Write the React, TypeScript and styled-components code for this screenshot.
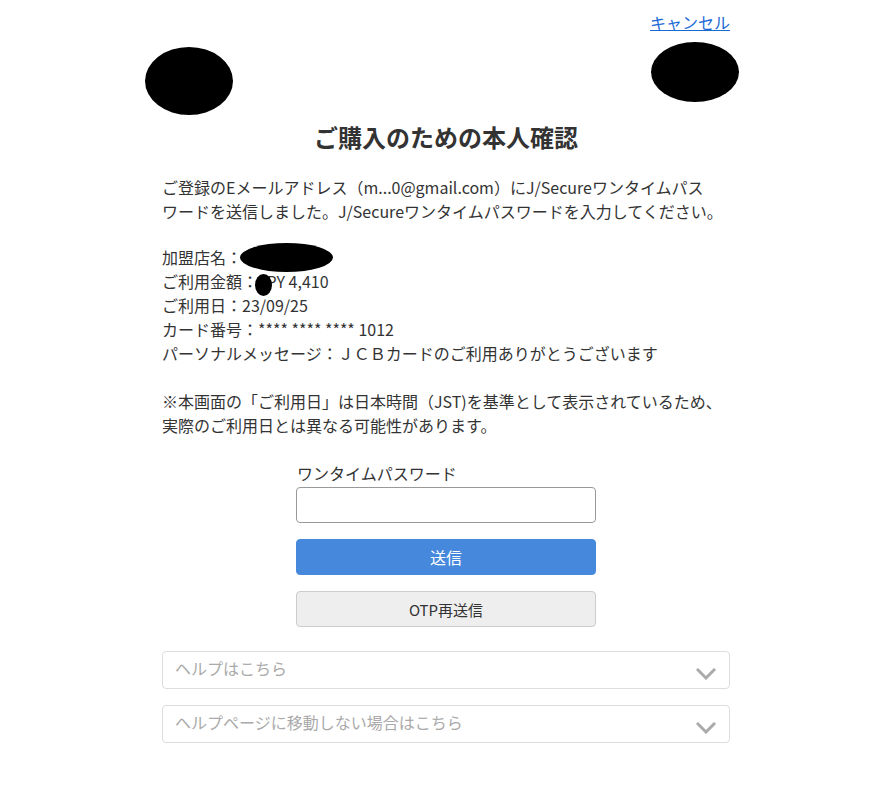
import React from "react";
import styled, { createGlobalStyle } from "styled-components";

const GlobalStyle = createGlobalStyle`
  html, body { margin: 0; padding: 0; background: #fff; }
  body {
    font-family: "Noto Sans CJK JP", "Noto Sans", sans-serif;
    color: #333;
    font-size: 16px;
  }
  * { box-sizing: border-box; }
`;

const Page = styled.div`
  display: flex;
  justify-content: center;
  padding: 10px 0 40px 11px;
`;

const Main = styled.div`
  width: 568px;
  display: flex;
  flex-direction: column;
`;

const CancelRow = styled.div`
  display: flex;
  justify-content: flex-end;
  line-height: 24px;
`;

const CancelLink = styled.a`
  color: #1a6ad6;
  text-decoration: underline;
  font-size: 16px;
  cursor: pointer;
`;

const LogoRow = styled.div`
  display: flex;
  justify-content: space-between;
  align-items: flex-start;
  margin: 8px -9px 0 -17px;
`;

const Redaction = styled.span<{ $w: number; $h: number; $top?: number; $left?: number }>`
  display: inline-block;
  width: ${(p) => p.$w}px;
  height: ${(p) => p.$h}px;
  margin-top: ${(p) => p.$top ?? 0}px;
  margin-left: ${(p) => p.$left ?? 0}px;
  background: #000;
  border-radius: 50%;
`;

const Title = styled.h1`
  margin: 4px 0 0;
  font-size: 24px;
  line-height: 36px;
  font-weight: 700;
  text-align: center;
  color: #333;
`;

const Paragraph = styled.p<{ $mt: number }>`
  margin: ${(p) => p.$mt}px 0 0;
  font-size: 16px;
  line-height: 24px;
`;

const InfoLine = styled.div`
  display: flex;
  align-items: center;
  height: 24px;
  white-space: pre;
`;

const Covered = styled.span`
  position: relative;
`;

const OverlayOval = styled.span`
  position: absolute;
  left: -3px;
  top: 5px;
  width: 17px;
  height: 22px;
  background: #000;
  border-radius: 50%;
`;

const Form = styled.div`
  width: 300px;
  align-self: center;
  margin: 24px 0 0;
  display: flex;
  flex-direction: column;
`;

const Label = styled.label`
  line-height: 24px;
  font-size: 16px;
  padding-left: 1px;
`;

const Input = styled.input`
  margin-top: 2px;
  height: 36px;
  width: 100%;
  border: 1px solid #999;
  border-radius: 4px;
  font-size: 16px;
  padding: 0 8px;
  outline: none;
`;

const Button = styled.button<{ $primary?: boolean }>`
  margin-top: 16px;
  height: 36px;
  width: 100%;
  border-radius: 4px;
  font-family: inherit;
  font-size: ${(p) => (p.$primary ? "16px" : "15px")};
  color: ${(p) => (p.$primary ? "#fff" : "#333")};
  background: ${(p) => (p.$primary ? "#4688dc" : "#eeeeee")};
  border: 1px solid ${(p) => (p.$primary ? "#4688dc" : "#cccccc")};
  cursor: pointer;
`;

const Accordions = styled.div`
  margin-top: 24px;
  display: flex;
  flex-direction: column;
  gap: 16px;
`;

const AccordionHead = styled.div`
  height: 38px;
  border: 1px solid #dddddd;
  border-radius: 4px;
  display: flex;
  justify-content: space-between;
  padding: 4px 13px 0 12px;
  color: #aaaaaa;
  line-height: 24px;
  font-size: 16px;
`;

const Chevron = styled.svg`
  margin-top: 12px;
  width: 20px;
  height: 12px;
`;

const Accordion: React.FC<{ label: string }> = ({ label }) => (
  <AccordionHead>
    <span>{label}</span>
    <Chevron viewBox="0 0 20 12">
      <path d="M2 2 L10 10 L18 2" fill="none" stroke="#aaa" strokeWidth="3" strokeLinecap="square" />
    </Chevron>
  </AccordionHead>
);

export default function App() {
  return (
    <>
      <GlobalStyle />
      <Page>
        <Main>
          <CancelRow>
            <CancelLink>キャンセル</CancelLink>
          </CancelRow>
          <LogoRow>
            <Redaction $w={88} $h={68} $top={5} />
            <Redaction $w={88} $h={60} />
          </LogoRow>
          <Title>ご購入のための本人確認</Title>
          <Paragraph $mt={20}>
            ご登録のEメールアドレス（m...0@gmail.com）にJ/Secureワンタイムパス
            <br />
            ワードを送信しました。J/Secureワンタイムパスワードを入力してください。
          </Paragraph>
          <Paragraph as="div" $mt={22}>
            <InfoLine>
              加盟店名：<Redaction $w={93} $h={29} $left={-2} />
            </InfoLine>
            <InfoLine>
              ご利用金額：
              <Covered>
                J<OverlayOval />
              </Covered>
              PY 4,410
            </InfoLine>
            <InfoLine>ご利用日：23/09/25</InfoLine>
            <InfoLine>カード番号：**** **** **** 1012</InfoLine>
            <InfoLine>パーソナルメッセージ：ＪＣＢカードのご利用ありがとうございます</InfoLine>
          </Paragraph>
          <Paragraph $mt={24}>
            ※本画面の「ご利用日」は日本時間（JST)を基準として表示されているため、
            <br />
            実際のご利用日とは異なる可能性があります。
          </Paragraph>
          <Form>
            <Label htmlFor="otp">ワンタイムパスワード</Label>
            <Input id="otp" type="text" />
            <Button $primary>送信</Button>
            <Button>OTP再送信</Button>
          </Form>
          <Accordions>
            <Accordion label="ヘルプはこちら" />
            <Accordion label="ヘルプページに移動しない場合はこちら" />
          </Accordions>
        </Main>
      </Page>
    </>
  );
}
